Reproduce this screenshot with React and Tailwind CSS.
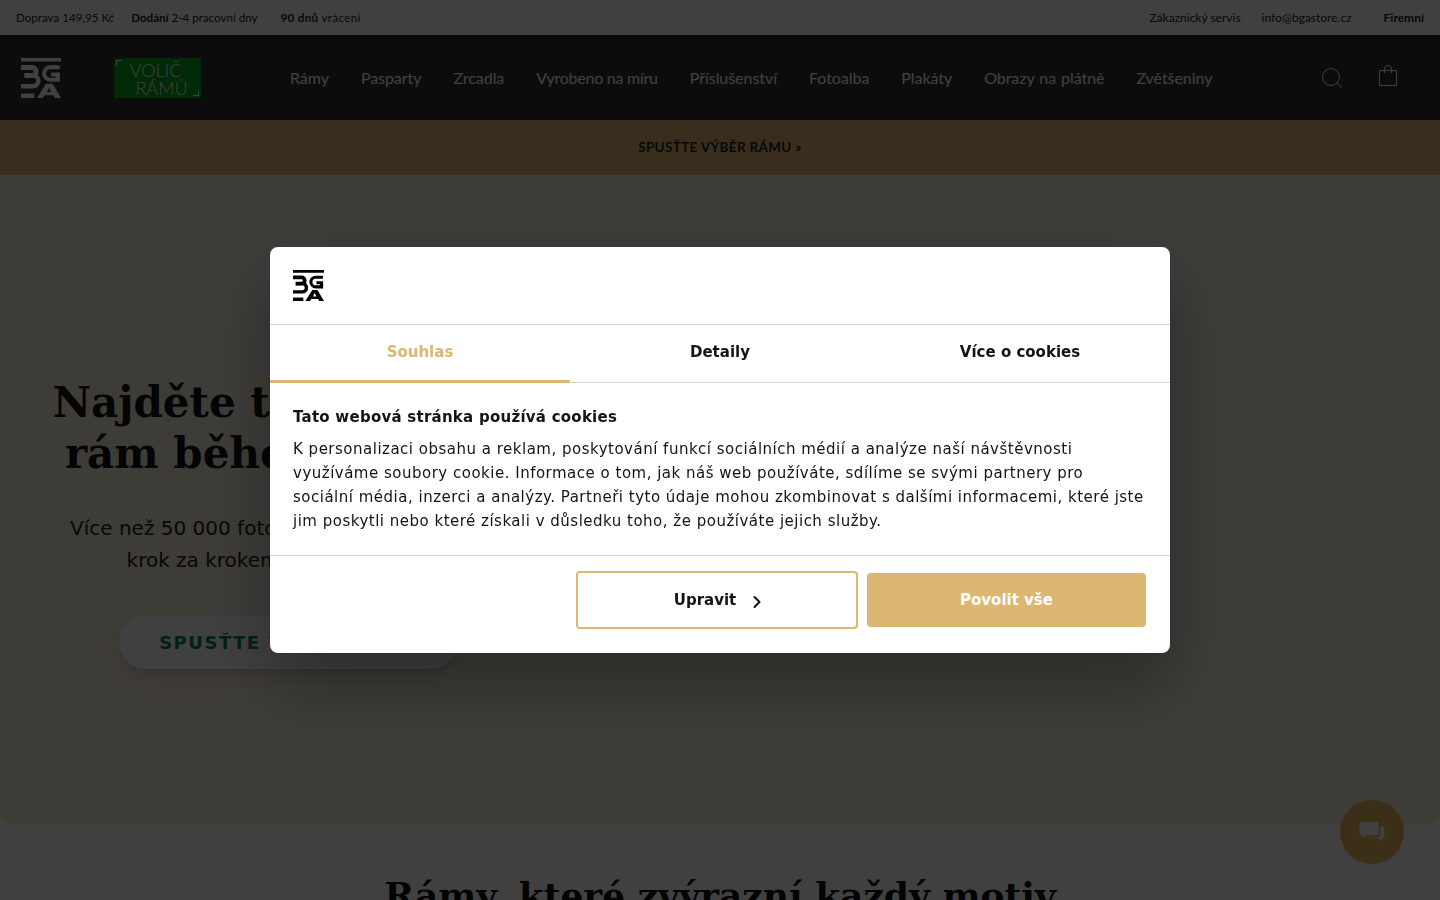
import React from 'react';
import { ChevronRight } from 'lucide-react';

const navItems = [
    { label: 'Rámy' },
    { label: 'Pasparty' },
    { label: 'Zrcadla' },
    { label: 'Vyrobeno na míru', className: 'tracking-[-0.25px]' },
    { label: 'Příslušenství' },
    { label: 'Fotoalba' },
    { label: 'Plakáty' },
    { label: 'Obrazy na plátně', className: '[word-spacing:1px]' },
    { label: 'Zvětšeniny' },
];

function Logo({ className }) {
    return (
        <svg viewBox="0 0 90 90" className={className} fill="none" stroke="currentColor">
            <rect x="0" y="0" width="90" height="8" fill="currentColor" stroke="none" />
            <path d="M0 21.5H25a9 9 0 0 1 0 18H8" strokeWidth="11" />
            <path d="M8 39.5H27a12 12 0 0 1 0 24H0" strokeWidth="10" />
            <path d="M87 21H66a14 14 0 0 0 0 28H83V37H68" strokeWidth="9" />
            <path fillRule="evenodd" fill="currentColor" stroke="none" d="M36 90L56 58H71L90 90H76L73 84H53L49 90zM58 77H68L63 67z" />
            <rect x="0" y="80" width="30" height="10" fill="currentColor" stroke="none" />
        </svg>
    );
}

function App() {
    return (
        <div className="h-[900px] overflow-hidden bg-white font-['Lato',sans-serif]">
            <div className="h-[35px] bg-white flex items-center justify-between px-4 text-xs text-[#222]">
                <div className="flex gap-[17px] text-[11.6px]">
                    <span>Doprava 149,95 Kč</span>
                    <span><b>Dodání</b> 2-4 pracovní dny</span>
                    <span className="ml-[6px] tracking-[0.35px]"><b>90 dnů</b> vrácení</span>
                </div>
                <div className="flex">
                    <span>Zákaznický servis</span>
                    <span className="ml-[21px]">info@bgastore.cz</span>
                    <b className="ml-8">Firemní</b>
                </div>
            </div>

            <header className="h-[85px] bg-[#333] flex items-center pl-[21px] pr-[43px] text-white">
                <Logo className="w-10 h-10" />
                <div className="ml-[53px] w-[87px] h-10 bg-[#00a41c] relative text-center text-lg leading-[18px] pt-[3px] font-light">
                    <span className="absolute left-[2px] top-[2px] w-[6px] h-[6px] border-l border-t border-white" />
                    <div className="pr-[4px]">VOLIČ</div>
                    <div className="pl-[8px]">RÁMŮ</div>
                    <span className="absolute right-[2px] bottom-[2px] w-[6px] h-[6px] border-r border-b border-white" />
                </div>
                <nav className="ml-[89px] flex gap-8 text-base tracking-[-0.05px]">
                    {navItems.map(item => (
                        <span key={item.label} className={item.className}>{item.label}</span>
                    ))}
                </nav>
                <div className="ml-auto flex items-center gap-[37px]">
                    <svg viewBox="0 0 20 20" className="w-5 h-5" fill="none" stroke="currentColor" strokeWidth="1">
                        <circle cx="9" cy="9" r="8.5" />
                        <path d="M15 15l5 5" />
                    </svg>
                    <svg viewBox="0 0 18 21" className="w-[18px] h-[21px] -mt-1" fill="none" stroke="currentColor" strokeWidth="1">
                        <rect x="0.5" y="5.5" width="17" height="15" />
                        <path d="M5.5 8V4a3.5 3.5 0 0 1 7 0v4" />
                    </svg>
                </div>
            </header>

            <div className="h-[55px] pb-px bg-[#e2b976] flex items-center justify-center text-[13.5px] font-bold text-[#222] tracking-wide">
                SPUSŤTE VÝBĚR RÁMU »
            </div>

            <section className="h-[650px] bg-[#f6eddc] rounded-b-2xl flex">
                <div className="w-[576px] pt-[202px] flex flex-col items-center text-center">
                    <h1 className="font-['DejaVu_Serif',serif] font-bold text-[42px] leading-[51px] text-[#111] whitespace-nowrap">
                        Najděte ten správný<br />rám během minuty
                    </h1>
                    <p className="mt-[33px] font-['DejaVu_Sans',sans-serif] text-xl leading-8 text-[#222] whitespace-nowrap">
                        Více než 50 000 fotografií a doporučení vás<br />krok za krokem dovedou k rámu
                    </p>
                    <button className="mt-10 w-[338px] h-[53px] rounded-full bg-white shadow-lg font-['DejaVu_Sans',sans-serif] font-bold text-lg tracking-[1.5px] text-[#00805f]">
                        SPUSŤTE VÝBĚR RÁMU
                    </button>
                </div>
            </section>

            <h2 className="mt-[43px] text-center font-['DejaVu_Serif',serif] font-bold text-4xl leading-[54px] text-[#111]">
                Rámy, které zvýrazní každý motiv
            </h2>

            <div className="fixed right-9 bottom-9 w-16 h-16 rounded-full bg-[#ecba62] flex items-center justify-center">
                <svg viewBox="0 0 30 24" className="w-[26px] h-5" fill="white">
                    <path d="M3 0h17a3 3 0 0 1 3 3v10a3 3 0 0 1-3 3H9l-5 4v-4H3a3 3 0 0 1-3-3V3a3 3 0 0 1 3-3z" />
                    <path d="M25 5h2a3 3 0 0 1 3 3v8a3 3 0 0 1-3 3v4l-5-4h-9l2-1h7a3 3 0 0 0 3-3z" />
                </svg>
            </div>

            {/* Cookie dialog */}
            <div className="fixed inset-0 bg-black/75 flex items-center justify-center font-['DejaVu_Sans',sans-serif]">
                <div className="w-[900px] h-[406px] bg-white rounded-lg shadow-[0_32px_68px_rgba(0,0,0,0.3)] text-[#141414] overflow-hidden">
                    <div className="h-[78px] border-b border-[#d6d6d6] pl-[23px] flex items-center">
                        <Logo className="w-[31px] h-[31px] text-black" />
                    </div>
                    <div className="h-[58px] border-b border-[#d6d6d6] flex text-[15px] font-bold">
                        <div className="w-[300px] -mb-px flex items-center justify-center border-b-[3px] border-[#dcb673] text-[#dcb673]">Souhlas</div>
                        <div className="w-[300px] pb-[3px] flex items-center justify-center">Detaily</div>
                        <div className="w-[300px] pb-[3px] flex items-center justify-center">Více o cookies</div>
                    </div>
                    <div className="h-[173px] border-b border-[#d6d6d6] px-[23px] pt-[22px]">
                        <div className="text-[15px] tracking-[0.25px] font-bold leading-6">Tato webová stránka používá cookies</div>
                        <p className="mt-2 text-[15px] tracking-[0.5px] leading-6">
                            K personalizaci obsahu a reklam, poskytování funkcí sociálních médií a analýze naší návštěvnosti využíváme soubory cookie. Informace o tom, jak náš web používáte, sdílíme se svými partnery pro sociální média, inzerci a analýzy. Partneři tyto údaje mohou zkombinovat s dalšími informacemi, které jste jim poskytli nebo které získali v důsledku toho, že používáte jejich služby.
                        </p>
                    </div>
                    <div className="flex items-center justify-end pt-[15px] pr-6 gap-[9px]">
                        <button className="w-[282px] h-[58px] pl-[7px] border-2 border-[#dcb673] rounded flex items-center justify-center text-[15px] font-bold">
                            Upravit
                            <ChevronRight className="ml-[11px] mt-1 w-5 h-5" strokeWidth={2.5} />
                        </button>
                        <button className="w-[279px] h-[54px] bg-[#dcb673] rounded-sm text-white text-[15px] font-bold">Povolit vše</button>
                    </div>
                </div>
            </div>
        </div>
    );
}

export default App;
